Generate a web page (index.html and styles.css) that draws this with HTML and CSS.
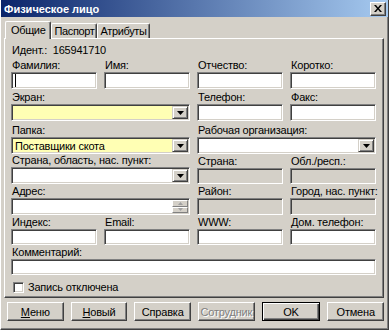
FILE: index.html
```html
<!DOCTYPE html>
<html lang="ru">
<head>
    <meta charset="UTF-8">
    <title>Физическое лицо</title>
    <link rel="stylesheet" href="styles.css">
</head>
<body>
    <div class="window">
        <div class="titlebar">
            <span class="title">Физическое лицо</span>
            <span class="close">
                <svg width="8" height="7" viewBox="0 0 8 7"><path d="M0 0h2l2 2.5L6 0h2L5 3.5 8 7H6L4 4.5 2 7H0l3-3.5z" fill="#000"/></svg>
            </span>
        </div>
        <div class="client">
            <div class="tabs">
                <div class="tab active">Общие</div>
                <div class="tab">Паспорт</div>
                <div class="tab">Атрибуты</div>
            </div>
            <div class="panel">
                <div class="ident">Идент.:&nbsp; 165941710</div>
                <div class="grid">
                    <div class="field"><label>Фамилия:</label><div class="edit"><span class="caret"></span></div></div>
                    <div class="field"><label>Имя:</label><div class="edit"></div></div>
                    <div class="field"><label>Отчество:</label><div class="edit"></div></div>
                    <div class="field"><label>Коротко:</label><div class="edit"></div></div>

                    <div class="field span2"><label>Экран:</label>
                        <div class="edit combo yellow"><span class="value"></span><span class="drop"><svg width="7" height="4"><polygon points="0,0 7,0 3.5,4" fill="#000"/></svg></span></div>
                    </div>
                    <div class="field"><label>Телефон:</label><div class="edit"></div></div>
                    <div class="field"><label>Факс:</label><div class="edit"></div></div>

                    <div class="field span2"><label>Папка:</label>
                        <div class="edit combo yellow"><span class="value">Поставщики скота</span><span class="drop"><svg width="7" height="4"><polygon points="0,0 7,0 3.5,4" fill="#000"/></svg></span></div>
                    </div>
                    <div class="field span2"><label>Рабочая организация:</label>
                        <div class="edit combo"><span class="value"></span><span class="drop"><svg width="7" height="4"><polygon points="0,0 7,0 3.5,4" fill="#000"/></svg></span></div>
                    </div>

                    <div class="field span2"><label>Страна, область, нас. пункт:</label>
                        <div class="edit combo"><span class="value"></span><span class="drop"><svg width="7" height="4"><polygon points="0,0 7,0 3.5,4" fill="#000"/></svg></span></div>
                    </div>
                    <div class="field"><label>Страна:</label><div class="edit disabled"></div></div>
                    <div class="field"><label>Обл./респ.:</label><div class="edit disabled"></div></div>

                    <div class="field span2"><label>Адрес:</label>
                        <div class="edit combo">
                            <span class="value"></span>
                            <span class="spin">
                                <span class="spin-btn"><svg width="5" height="3"><polygon points="2.5,0 5,3 0,3" fill="#a0a0a0"/></svg></span>
                                <span class="spin-btn"><svg width="5" height="3"><polygon points="0,0 5,0 2.5,3" fill="#a0a0a0"/></svg></span>
                            </span>
                        </div>
                    </div>
                    <div class="field"><label>Район:</label><div class="edit disabled"></div></div>
                    <div class="field"><label>Город, нас. пункт:</label><div class="edit disabled"></div></div>

                    <div class="field"><label>Индекс:</label><div class="edit"></div></div>
                    <div class="field"><label>Email:</label><div class="edit"></div></div>
                    <div class="field"><label>WWW:</label><div class="edit"></div></div>
                    <div class="field"><label>Дом. телефон:</label><div class="edit"></div></div>

                    <div class="field span4"><label>Комментарий:</label><div class="edit"></div></div>
                </div>
                <div class="check">
                    <span class="box"></span>
                    <span>Запись отключена</span>
                </div>
            </div>
            <div class="buttons">
                <button><u>М</u>еню</button>
                <button><u>Н</u>овый</button>
                <button>Справка</button>
                <button class="disabled">Сотрудник</button>
                <button class="default">OK</button>
                <button>Отмена</button>
            </div>
        </div>
    </div>
</body>
</html>
```

FILE: styles.css
```css
body {
    margin: 0;
    background: #d4d0c8;
    font-family: 'Liberation Sans', Arial, sans-serif;
    font-size: 11px;
    letter-spacing: -0.2px;
    color: #000;
}

.window {
    width: 389px;
    height: 330px;
    box-sizing: border-box;
    background: #d4d0c8;
    border-left: 1px solid #fff;
    border-right: 1px solid #404040;
    border-bottom: 1px solid #404040;
    box-shadow: inset -1px -1px #808080;
    overflow: hidden;
}

.titlebar {
    height: 17px;
    display: flex;
    align-items: center;
    justify-content: space-between;
    padding: 0 2px 0 3px;
    background: linear-gradient(to right, #0a246a, #a6caf0);
}

.title {
    color: #fff;
    font-weight: bold;
    font-size: 11px;
    letter-spacing: 0;
}

.close {
    width: 16px;
    height: 14px;
    box-sizing: border-box;
    display: flex;
    align-items: center;
    justify-content: center;
    background: #d4d0c8;
    border: 1px solid;
    border-color: #fff #404040 #404040 #fff;
    box-shadow: inset -1px -1px #808080;
}

.client {
    padding: 5px 4px 0 3px;
}

/* Вкладки */
.tabs {
    display: flex;
    align-items: flex-end;
    height: 16px;
    padding-left: 3px;
}

.tab {
    height: 14px;
    line-height: 14px;
    padding: 0 2px;
    letter-spacing: -0.35px;
    border-top: 1px solid #fff;
    border-left: 1px solid #fff;
    border-right: 1px solid #404040;
    box-shadow: inset -1px 0 #808080;
    border-radius: 2px 2px 0 0;
}

.tab.active {
    height: 17px;
    line-height: 16px;
    margin-bottom: -1px;
    margin-left: -2px;
    padding: 0 5px;
    position: relative;
    z-index: 1;
    background: #d4d0c8;
}

.panel {
    height: 260px;
    box-sizing: border-box;
    border: 1px solid;
    border-color: #fff #404040 #404040 #fff;
    box-shadow: inset -1px -1px #808080;
    padding: 4px 6px 0 6px;
}

.ident {
    height: 14px;
    line-height: 14px;
    padding-left: 1px;
    margin-bottom: 1px;
}

.grid {
    display: grid;
    grid-template-columns: repeat(4, 86px);
    grid-template-rows: 31px 32px 33px 30px 31px 30px 30px;
    column-gap: 7px;
}

.span2 { grid-column: span 2; }
.span4 { grid-column: span 4; }

.field {
    display: flex;
    flex-direction: column;
    justify-content: flex-end;
}

.field label {
    display: block;
    height: 14px;
    line-height: 14px;
    padding-left: 1px;
    white-space: nowrap;
}

.edit {
    height: 17px;
    box-sizing: border-box;
    background: #fff;
    border: 1px solid;
    border-color: #808080 #fff #fff #808080;
    box-shadow: inset 1px 1px #404040, inset -1px -1px #d4d0c8;
    display: flex;
    align-items: center;
    padding: 1px;
}

.edit.yellow { background: #ffffb4; }
.edit.disabled { background: #d4d0c8; }

.caret {
    width: 1px;
    height: 13px;
    margin-left: 2px;
    background: #000;
}

.value {
    flex: 1;
    padding-left: 2px;
    white-space: nowrap;
}

.drop {
    width: 16px;
    height: 13px;
    box-sizing: border-box;
    background: #d4d0c8;
    border: 1px solid;
    border-color: #d4d0c8 #404040 #404040 #d4d0c8;
    box-shadow: inset 1px 1px #fff, inset -1px -1px #808080;
    display: flex;
    align-items: center;
    justify-content: center;
}

.spin {
    width: 16px;
    height: 13px;
    display: flex;
    flex-direction: column;
    background: #e8e6e1;
}

.spin-btn {
    flex: 1;
    display: flex;
    align-items: center;
    justify-content: center;
    background: #d4d0c8;
    border: 1px solid;
    border-color: #fff #808080 #808080 #fff;
}

.check {
    display: flex;
    align-items: center;
    gap: 4px;
    margin-top: 5px;
    padding-left: 2px;
    height: 14px;
}

.box {
    width: 11px;
    height: 11px;
    box-sizing: border-box;
    background: #fff;
    border: 1px solid;
    border-color: #808080 #fff #fff #808080;
    box-shadow: inset 1px 1px #404040, inset -1px -1px #d4d0c8;
}

/* Кнопки */
.buttons {
    display: flex;
    gap: 7px;
    padding: 4px 0 0 3px;
}

button {
    width: 57px;
    height: 19px;
    padding: 0;
    font-family: inherit;
    font-size: 11px;
    letter-spacing: inherit;
    color: #000;
    background: #d4d0c8;
    border: 1px solid;
    border-color: #fff #404040 #404040 #fff;
    box-shadow: inset -1px -1px #808080;
}

button.default {
    width: 59px;
    border: 1px solid #000;
    box-shadow: inset 1px 1px #fff, inset -1px -1px #404040, inset -2px -2px #808080;
}

button.disabled {
    color: #808080;
    text-shadow: 1px 1px #fff;
}
```
